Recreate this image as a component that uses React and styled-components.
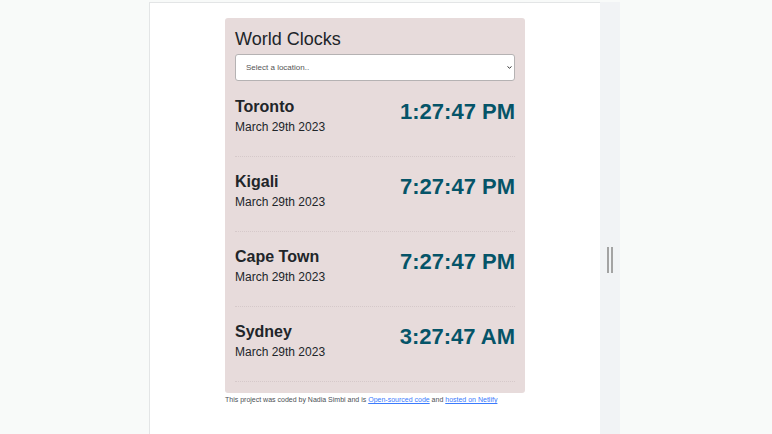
import React, { useState } from "react";
import styled, { createGlobalStyle } from "styled-components";

const GlobalStyle = createGlobalStyle`
  *, *::before, *::after { box-sizing: border-box; }
  body {
    margin: 0;
    background: #f8faf9;
    color: #212529;
    font-family: "Liberation Sans", Arial, sans-serif;
  }
`;

const Page = styled.div`
  display: flex;
  min-height: 100vh;
  padding: 2px 152px 0 149px;
`;

const Preview = styled.main`
  flex: 1;
  min-width: 0;
  display: flex;
  flex-direction: column;
  align-items: center;
  padding: 15px 0 24px;
  background: #fff;
  border-top: 1px solid #e3e5e6;
  border-left: 1px solid #e3e5e6;
`;

const Gutter = styled.div`
  flex: 0 0 20px;
  height: calc(100vh - 2px);
  display: flex;
  align-items: center;
  justify-content: center;
  gap: 2px;
  padding-top: 84px;
  background: #f1f3f5;
`;

const GripBar = styled.span`
  width: 2px;
  height: 26px;
  background: #a3a3a3;
`;

const Content = styled.div`
  width: 100%;
  max-width: 300px;
`;

const Card = styled.section`
  padding: 10px 10px 11px;
  border-radius: 3px;
  background: #e7dbdb;
`;

const Title = styled.h1`
  margin: 0 0 4px;
  font-size: 18px;
  font-weight: 400;
  line-height: 22px;
`;

const LocationSelect = styled.select`
  display: block;
  width: 100%;
  height: 27px;
  padding: 0 0 0 10px;
  border: 1px solid #b5b2b3;
  border-radius: 3px;
  background: #fff;
  color: #555;
  font-family: inherit;
  font-size: 8px;
  appearance: none;
`;

const SelectWrap = styled.div`
  display: grid;
  align-items: center;
  margin-bottom: 14px;

  > * { grid-area: 1 / 1; }
`;

const Chevron = styled.svg`
  justify-self: end;
  width: 5px;
  height: 3px;
  margin-right: 3px;
  pointer-events: none;
`;

const CityRow = styled.article`
  display: flex;
  justify-content: space-between;
  height: 75px;
  border-bottom: 1px dotted #d6c9ca;

  & + & { padding-top: 13px; }
  &:first-of-type { height: 62px; }
`;

const CityName = styled.h2`
  margin: 2px 0 1px;
  font-size: 16px;
  line-height: 20px;
`;

const CityDate = styled.div`
  font-size: 12px;
  line-height: 18px;
`;

const CityTime = styled.div`
  padding-top: 4px;
  color: #055468;
  font-size: 22px;
  font-weight: 700;
  line-height: 26px;
  white-space: nowrap;
`;

const Credit = styled.footer`
  margin-top: 2px;
  color: #4c5055;
  font-size: 7px;
  line-height: 10px;
`;

const CreditLink = styled.a`
  color: #3b7bfd;
`;

const cities = [
  { name: "Toronto", date: "March 29th 2023", time: "1:27:47 PM" },
  { name: "Kigali", date: "March 29th 2023", time: "7:27:47 PM" },
  { name: "Cape Town", date: "March 29th 2023", time: "7:27:47 PM" },
  { name: "Sydney", date: "March 29th 2023", time: "3:27:47 AM" },
];

export default function App() {
  const [location, setLocation] = useState("");
  return (
    <>
      <GlobalStyle />
      <Page>
        <Preview>
          <Content>
            <Card>
              <Title>World Clocks</Title>
              <SelectWrap>
                <LocationSelect
                  aria-label="Location"
                  value={location}
                  onChange={(e) => setLocation(e.target.value)}
                >
                  <option value="">Select a location..</option>
                  {cities.map((c) => (
                    <option key={c.name} value={c.name}>{c.name}</option>
                  ))}
                </LocationSelect>
                <Chevron viewBox="0 0 5 3" aria-hidden="true">
                  <path d="M0.5 0.5L2.5 2.2L4.5 0.5" fill="none" stroke="#333" />
                </Chevron>
              </SelectWrap>
              {cities.map((c) => (
                <CityRow key={c.name}>
                  <div>
                    <CityName>{c.name}</CityName>
                    <CityDate>{c.date}</CityDate>
                  </div>
                  <CityTime>{c.time}</CityTime>
                </CityRow>
              ))}
            </Card>
            <Credit>
              This project was coded by Nadia Simbi and is{" "}
              <CreditLink href="#code">Open-sourced code</CreditLink> and{" "}
              <CreditLink href="#site">hosted on Netlify</CreditLink>
            </Credit>
          </Content>
        </Preview>
        <Gutter role="separator" aria-orientation="vertical">
          <GripBar />
          <GripBar />
        </Gutter>
      </Page>
    </>
  );
}
